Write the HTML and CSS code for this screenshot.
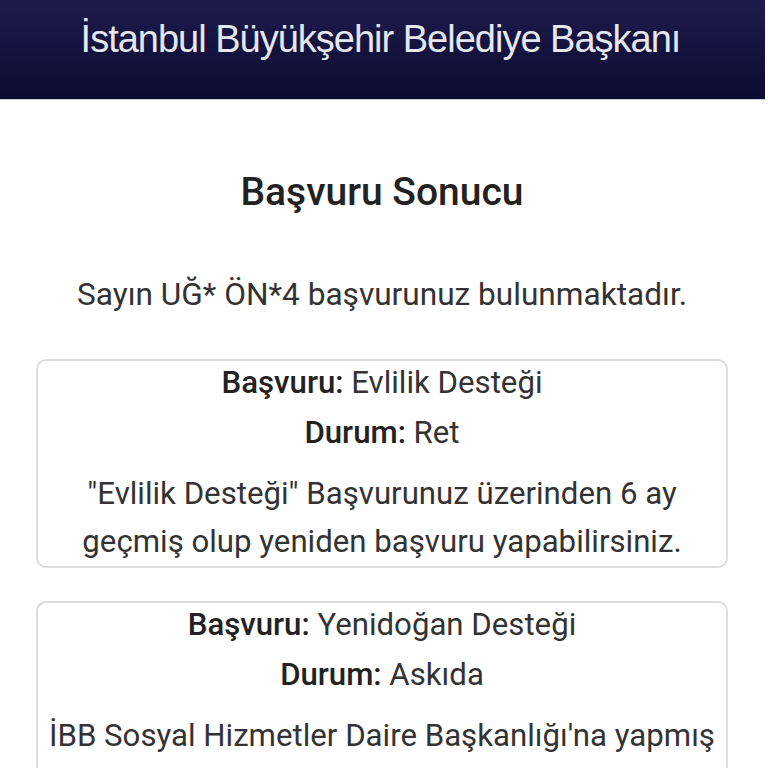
FILE: index.html
```html
<!DOCTYPE html>
<html lang="tr">
<head>
<meta charset="utf-8">
<link rel="stylesheet" href="styles.css">
</head>
<body>
<header class="top">
  <div class="top-title">İstanbul Büyükşehir Belediye Başkanı</div>
</header>
<main class="main">
  <h1 class="title">Başvuru Sonucu</h1>
  <p class="lead">Sayın UĞ* ÖN*4 başvurunuz bulunmaktadır.</p>
  <section class="card">
    <div class="row"><b>Başvuru:</b> Evlilik Desteği</div>
    <div class="row"><b>Durum:</b> Ret</div>
    <p class="desc">"Evlilik Desteği" Başvurunuz üzerinden 6 ay geçmiş olup yeniden başvuru yapabilirsiniz.</p>
  </section>
  <section class="card">
    <div class="row"><b>Başvuru:</b> Yenidoğan Desteği</div>
    <div class="row"><b>Durum:</b> Askıda</div>
    <p class="desc">İBB Sosyal Hizmetler Daire Başkanlığı'na yapmış olduğunuz başvurunuz değerlendirme aşamasındadır.</p>
  </section>
</main>
</body>
</html>
```
FILE: styles.css
```css
html, body { margin: 0; padding: 0; background: #fff; }
body { font-family: Roboto, "Noto Sans", sans-serif; color: #333; }
.top {
  width: 765px;
  height: 100px;
  background: linear-gradient(#1d1c4c, #0c0b31);
  border-bottom: 1px solid #c9c9d6;
  display: flex;
  justify-content: center;
  box-sizing: border-box;
}
.top-title {
  font-family: "Liberation Sans", Arial, sans-serif;
  color: #e6e6ee;
  font-size: 38px;
  line-height: 44px;
  padding-top: 17px;
  padding-right: 4px;
  letter-spacing: -1px;
}
.main {
  padding: 0 40px 0 36px;
  display: flex;
  flex-direction: column;
  align-items: stretch;
}
.title {
  margin: 67px 0 0;
  text-align: center;
  font-size: 39px;
  font-weight: 500;
  line-height: 50px;
  color: #222;
}
.lead {
  margin: 60px 0 0;
  text-align: center;
  font-size: 31.6px;
  line-height: 36px;
  color: #333;
}
.card {
  margin-top: 46px;
  border: 2px solid #dcdcdc;
  border-radius: 10px;
  padding: 0 8px;
  text-align: center;
  font-size: 31.2px;
  color: #333;
  display: flex;
  flex-direction: column;
  gap: 6px;
}
.card + .card { margin-top: 33px; }
.row { line-height: 44px; }
.row b { font-weight: 500; color: #222; }
.desc { margin: 9px 0 0; line-height: 48px; }
```
